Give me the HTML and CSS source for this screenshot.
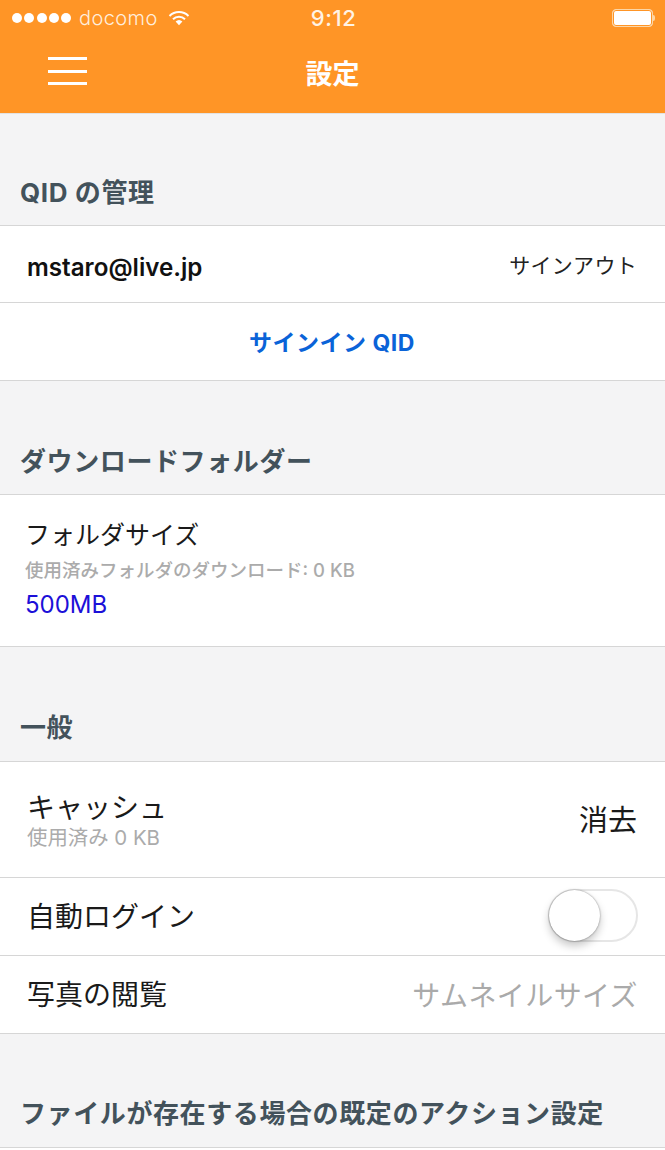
FILE: index.html
```html
<!DOCTYPE html>
<html lang="ja">
<head>
<meta charset="utf-8">
<title>設定</title>
<link rel="stylesheet" href="styles.css">
</head>
<body>
<header class="top">
  <div class="status">
    <div class="status-left">
      <span class="dots"><i></i><i></i><i></i><i></i><i></i></span>
      <span class="carrier">docomo</span>
      <svg class="wifi" width="22" height="16" viewBox="0 0 22 16"><path d="M1.5 6 A13.5 13.5 0 0 1 20.5 6" fill="none" stroke="#fff" stroke-width="2"/><path d="M5 9.2 A8.5 8.5 0 0 1 17 9.2" fill="none" stroke="#fff" stroke-width="2"/><path d="M7.6 11.6 L11 15.2 L14.4 11.6 A5 5 0 0 0 7.6 11.6 Z" fill="#fff"/></svg>
    </div>
    <span class="clock">9:12</span>
    <div class="battery"><span class="cell"></span><span class="nub"></span></div>
  </div>
  <div class="nav">
    <div class="burger"><i></i><i></i><i></i></div>
    <h1 class="title">設定</h1>
  </div>
</header>
<main>
  <h2 class="sec sec-a">QID の管理</h2>
  <div class="row row-a">
    <span class="email">mstaro@live.jp</span>
    <span class="signout">サインアウト</span>
  </div>
  <div class="row row-b"><span class="link">サインイン QID</span></div>

  <h2 class="sec sec-b">ダウンロードフォルダー</h2>
  <div class="row folder">
    <div class="label-sm">フォルダサイズ</div>
    <div class="hint-b">使用済みフォルダのダウンロード: 0 KB</div>
    <div class="size">500MB</div>
  </div>

  <h2 class="sec sec-c">一般</h2>
  <div class="row cache">
    <div class="cache-l">
      <div class="label">キャッシュ</div>
      <div class="hint">使用済み 0 KB</div>
    </div>
    <span class="label clear">消去</span>
  </div>
  <div class="row row-c">
    <span class="label">自動ログイン</span>
    <span class="toggle"><span class="knob"></span></span>
  </div>
  <div class="row row-d">
    <span class="label">写真の閲覧</span>
    <span class="value">サムネイルサイズ</span>
  </div>

  <h2 class="sec sec-d">ファイルが存在する場合の既定のアクション設定</h2>
  <div class="row stub"></div>
</main>
</body>
</html>
```
FILE: styles.css
```css
* { box-sizing: border-box; }
html, body { margin: 0; padding: 0; }
body {
  width: 665px;
  height: 1150px;
  overflow: hidden;
  background: #f4f4f5;
  font-family: Inter, "Noto Sans CJK JP", sans-serif;
  color: #111;
}
.top { background: #ff9526; height: 114px; border-bottom: 1px solid #e2e2e2; color: #fff; }
.status {
  height: 38px;
  display: flex;
  align-items: center;
  justify-content: space-between;
  padding: 0 10px 2px 12px;
  position: relative;
}
.status-left { display: flex; align-items: center; }
.dots { display: flex; gap: 2.25px; margin-right: 8px; }
.dots i { width: 10px; height: 10px; border-radius: 50%; background: #fff; display: block; }
.carrier { font-size: 20px; font-weight: 300; color: #ffeedd; letter-spacing: .4px; margin-right: 10px; }
.wifi { display: block; }
.clock { position: absolute; left: 2px; right: 0; text-align: center; font-size: 22px; font-weight: 500; letter-spacing: .6px; color: #fff3e5; }
.battery { display: flex; align-items: center; }
.cell { display: block; width: 41px; height: 18px; border: 1.5px solid #fcd6a6; border-radius: 4px; background: #fff; box-shadow: inset 0 0 0 1px #ff9526; }
.nub { display: block; width: 2px; height: 6px; background: #fcd6a6; border-radius: 0 2px 2px 0; }
.nav { height: 75px; position: relative; display: flex; align-items: center; justify-content: center; }
.burger { position: absolute; left: 48px; top: 19px; width: 39px; display: flex; flex-direction: column; gap: 9.5px; }
.burger i { display: block; height: 3px; background: #fff; }
.title { margin: 0; font-size: 27px; font-weight: 700; line-height: 1; color: #fff; position: relative; top: -1px; }
.sec {
  margin: 0;
  padding: 0 0 0 20px;
  font-size: 26px;
  font-weight: 700;
  letter-spacing: .6px;
  color: #43525b;
  display: flex;
  align-items: flex-end;
  line-height: 36px;
}
.sec-a { height: 111px; padding-bottom: 14px; }
.sec-b { height: 113px; padding-bottom: 14px; }
.sec-c { height: 114px; padding-bottom: 15px; }
.sec-d { height: 113px; padding-bottom: 15px; }
.row {
  background: #fff;
  border-top: 1px solid #d6d6d6;
  display: flex;
  align-items: center;
  justify-content: space-between;
  padding: 0 28px 0 27px;
}
.row-a { height: 77px; }
.row-b { height: 79px; justify-content: center; border-bottom: 1px solid #d6d6d6; padding-bottom: 2px; }
.row-c { height: 78px; }
.row-d { height: 79px; border-bottom: 1px solid #d6d6d6; }
.stub { height: 10px; }
.email { font-size: 24.2px; font-weight: 600; color: #111; position: relative; top: 3px; }
.signout { font-size: 21px; letter-spacing: .3px; color: #222; }
.link { font-size: 23px; font-weight: 700; letter-spacing: .5px; color: #0a63d8; }
.folder {
  display: block;
  height: 153px;
  padding: 20px 25px 0;
  border-bottom: 1px solid #d6d6d6;
}
.label-sm { font-size: 25px; line-height: 40px; color: #1a1a1a; }
.hint-b { font-size: 18.5px; line-height: 30px; color: #ababab; font-weight: 500; }
.size { font-size: 24px; line-height: 40px; color: #1c10d8; }
.cache { height: 116px; }
.cache-l { display: flex; flex-direction: column; }
.label { font-size: 28px; line-height: 36px; color: #1a1a1a; }
.clear { font-size: 29px; padding-top: 2px; }
.hint { font-size: 20.4px; line-height: 24px; color: #ababab; }
.value { font-size: 28px; letter-spacing: .4px; color: #aaa; margin-right: -1px; position: relative; top: -1px; }
.toggle {
  width: 90px;
  height: 53px;
  margin: -2px -1px 0 0;
  border: 2px solid #e6e6e6;
  border-radius: 27px;
  background: #fff;
  display: block;
  position: relative;
}
.knob {
  position: absolute;
  left: -1px;
  top: -1px;
  width: 51px;
  height: 51px;
  border-radius: 50%;
  background: #fff;
  box-shadow: 0 0 2px rgba(0,0,0,.45), 0 5px 9px rgba(0,0,0,.22);
}
```
